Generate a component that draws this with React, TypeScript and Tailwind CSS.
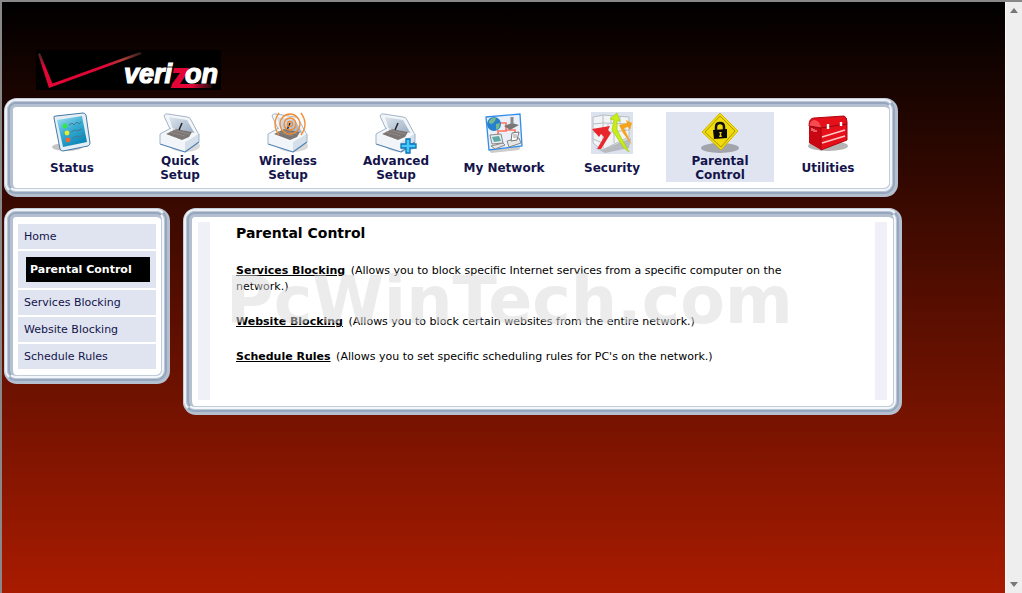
import { ReactNode } from 'react';
import { clsx } from 'clsx';

// Bevelled frame, lit from the top left: the highlight is outside on top/left and inside on bottom/right
function PanelFrame({ className, children }: { className?: string; children: ReactNode }) {
  return (
    <div className={clsx('rounded-[13px] border-t border-r-3 border-b-3 border-l border-t-[#c3cdd9] border-r-[#b4c0cf] border-b-[#b4c0cf] border-l-[#c3cdd9] bg-[#b4c0cf]', className)}>
      <div className="rounded-[11px] border-2 border-t-[#eef2f7] border-r-[#95a6be] border-b-[#95a6be] border-l-[#eef2f7] bg-[#b4c0cf]">
        <div className="rounded-[9px] border border-[#bcc7d5] bg-[#b4c0cf]">
          <div className="rounded-lg border-2 border-t-[#95a6be] border-r-[#f3f6fa] border-b-[#f3f6fa] border-l-[#95a6be] bg-[#b4c0cf]">
            <div className="rounded-md border-t-3 border-r border-b border-l-3 border-t-[#b4c0cf] border-r-[#c3cdd9] border-b-[#c3cdd9] border-l-[#b4c0cf] bg-white">
              {children}
            </div>
          </div>
        </div>
      </div>
    </div>
  );
}

function StatusIcon() {
  return (
    <svg width="42" height="42" viewBox="0 0 42 42" aria-hidden="true">
      <defs>
        <linearGradient id="screen" x1="0" y1="0" x2="0.6" y2="1">
          <stop offset="0" stopColor="#a6e0f2" />
          <stop offset="0.5" stopColor="#3aaed4" />
          <stop offset="1" stopColor="#0a86b8" />
        </linearGradient>
      </defs>
      <ellipse cx="16" cy="35" rx="15" ry="4" fill="#c4c4c4" />
      <path d="M3 6Q2 4 5 4L32 1Q34 1 35 3L39 31Q39 33 37 34L12 39Q10 39 9 37Z" fill="#e6eef5" stroke="#4379a6" strokeLinejoin="round" />
      <path d="M6 8 31 4 36 30 12 35Z" fill="url(#screen)" />
      <path d="M18 13l3-2 2 2 3-3 2 2 2-2M20 20l4-2 2 1 5-2M21 27l4-3 3 1 5-2" fill="none" stroke="#477891" />
      <circle cx="14" cy="14" r="2.4" fill="#35e83d" />
      <circle cx="16" cy="21" r="2.4" fill="#e9ed22" />
      <circle cx="17" cy="28" r="2.4" fill="#f16835" />
    </svg>
  );
}

function RouterIcon({ waves, plus }: { waves?: boolean; plus?: boolean }) {
  return (
    <svg width="42" height="42" viewBox="0 0 42 42" aria-hidden="true">
      <defs>
        <linearGradient id="lid" x1="0" y1="0" x2="1" y2="1">
          <stop offset="0" stopColor="#dde5ed" />
          <stop offset="1" stopColor="#96abc2" />
        </linearGradient>
      </defs>
      <ellipse cx="26" cy="34" rx="15" ry="6" fill="#d9d9d9" />
      <path d="M5 4Q6 1 9 2L28 5Q31 5 32 8L40 23 33 24 12 19Z" fill="#f3f6f9" stroke="#a3b5c7" strokeLinejoin="round" />
      <path d="M10 5 28 8 36 22 14 18Z" fill="url(#lid)" />
      <path d="M1 22 12 16 40 22 26 31Z" fill="#f4f7fa" />
      <path d="M7 22 17 17 33 20 30 25 23 28Z" fill="#7b7674" />
      <path d="M11 20 26 24M14 18 30 22" stroke="#8f8a88" />
      <path d="M1 22 26 30V40L1 32Z" fill="#f1f5f9" />
      <path d="M26 30 40 22V30L26 40Z" fill="#d5dfe9" />
      <path d="M1 32 26 40 40 30" fill="none" stroke="#4f82b3" strokeWidth="1.2" strokeLinejoin="round" />
      <path d="M1 32V22L12 16M40 30V22" fill="none" stroke="#9fb3c8" />
      <path d="M20 18 23 11" stroke="#222" strokeWidth="1.5" />
      {waves && (
        <g fill="none" stroke="#f58a2d" strokeWidth="1.3">
          <circle cx="23" cy="12" r="2.5" />
          <circle cx="23" cy="12" r="6" />
          <circle cx="23" cy="12" r="10" />
          <path d="M12 1Q4 12 12 23M34 1Q42 12 34 23" />
        </g>
      )}
      {plus && <path d="M31 27h4v5h6v4h-6v5h-4v-5h-5v-4h5Z" fill="#44c9fa" stroke="#0873b6" strokeWidth="1.3" />}
    </svg>
  );
}

function NetworkIcon() {
  return (
    <svg width="42" height="42" viewBox="0 0 42 42" aria-hidden="true">
      <path d="M5 36 38 34 36 38 8 41Z" fill="#ccc" />
      <path d="M3 5 37 2 39 34 6 38Z" fill="#e9f0f9" stroke="#318de9" strokeWidth="1.3" />
      <path d="M15 11h8v8h-8v7M23 18h9v8" fill="none" stroke="#ff735f" strokeWidth="1.7" />
      <circle cx="11" cy="12" r="7" fill="#277fd0" />
      <path d="M6 9q4-5 7-3l-1 3-3 3-3-1ZM13 12l4-1-1 5-3 2Z" fill="#76b98b" />
      <path d="M21 14 29 11 36 13 27 18Z" fill="#777" />
      <path d="M29 12V5" stroke="#888" strokeWidth="3" />
      <path d="M7 23 18 22 20 31 9 32Z" fill="#e8edf0" stroke="#888" />
      <path d="M9 25 16 24 18 29 11 30Z" fill="#5ca9a7" />
      <path d="M8 34 20 31 22 33 12 37ZM24 29 36 26 38 31 26 35Z" fill="#e6e6e6" stroke="#888" />
      <path d="M28 29 29 21 36 20 34 28Z" fill="#fff" stroke="#777" />
      <path d="M30 23h4M30 25h4" stroke="#999" />
    </svg>
  );
}

function SecurityIcon() {
  return (
    <svg width="42" height="42" viewBox="0 0 42 42" aria-hidden="true">
      <path d="M0 0h42v42H0Z" fill="#dce3ee" />
      <path d="M2 35 11 38 40 26 38 36 14 41Z" fill="#b7bbc0" />
      <path d="M2 5 12 3 38 5V25L11 38 2 31Z" fill="#f1f3f5" stroke="#b8bec5" />
      <path d="M2 12l10-1 26 1M2 20l10 1 26-3M2 27l10 4M12 3v34M20 4v8M29 4v8M17 12v8M34 12v7M23 20v11" fill="none" stroke="#b8bec5" />
      <path d="M6 37 13 25 10 22 8 25 1 17 19 14 17 18 20 21 10 37Z" fill="#e9262b" />
      <path d="M21 18 23 8 19 7 26 1 29 9H26L26 18 38 40 33 36Z" fill="#c9ed16" stroke="#a4cd08" strokeWidth=".7" />
      <path d="M32 21 28 13 36 11 35 8 41 11 39 18 37 15 33 16 41 33Z" fill="#f6a31c" />
    </svg>
  );
}

function ParentalIcon() {
  return (
    <svg width="42" height="42" viewBox="0 0 42 42" aria-hidden="true">
      <ellipse cx="21" cy="36" rx="19" ry="5" fill="#a2a5ab" />
      <path d="M21 1 39 19 22 38 3 20Z" fill="#f2db0b" stroke="#d0b900" />
      <path d="M21 4 36 19 22 35 6 20Z" fill="none" stroke="#a89800" />
      <path d="M17 19v-4q0-4 4-4t4 4v4" fill="none" stroke="#111" strokeWidth="2.5" />
      <path d="M14 18 28 17V26L15 27Z" fill="#090909" />
      <path d="M20 20h3l-1 2 1 3h-3l1-3Z" fill="#e8d000" />
    </svg>
  );
}

function ToolboxIcon() {
  return (
    <svg width="42" height="42" viewBox="0 0 42 42" aria-hidden="true">
      <ellipse cx="21" cy="34" rx="20" ry="5" fill="#b5b5b5" />
      <path d="M2 14 14 16V38L2 31Z" fill="#c80713" />
      <path d="M2 14Q2 6 7 6L37 4Q40 5 40 10V28L14 38V16Z" fill="#e6101b" stroke="#ad0610" />
      <path d="M2 14Q4 7 8 8 13 9 14 16Z" fill="#f44a50" />
      <path d="M2 14 14 16 40 12" fill="none" stroke="#940710" />
      <path d="M15 25 38 18M15 31 38 24" stroke="#ffc5c5" strokeWidth="1.6" />
      <path d="M21 12v5M34 10v4" stroke="#fff" strokeWidth="2.4" />
      <path d="M5 16v3M7 17v3M9 18v2" stroke="#ffb5b8" />
    </svg>
  );
}

function VerizonLogo() {
  return (
    <svg width="185" height="40" viewBox="0 0 185 40" role="img" aria-label="verizon">
      <defs>
        <linearGradient id="check-left" x1="0" y1="0" x2="0" y2="1">
          <stop offset="0" stopColor="#3b2a24" />
          <stop offset="0.4" stopColor="#e40537" />
        </linearGradient>
        <linearGradient id="check-right" x1="0" y1="0" x2="1" y2="0">
          <stop offset="0.6" stopColor="#e40537" />
          <stop offset="0.8" stopColor="#ad3b38" />
          <stop offset="1" stopColor="#251c17" />
        </linearGradient>
        <linearGradient id="z-tail" x1="0" y1="0" x2="1" y2="0">
          <stop offset="0.5" stopColor="#e40537" />
          <stop offset="1" stopColor="#140b08" />
        </linearGradient>
      </defs>
      <path d="M0 0h185v40H0Z" />
      <path d="M2 4 4 3 17 35 13 38Z" fill="url(#check-left)" />
      <path d="M13 38 15 34 104 2 106 4Z" fill="url(#check-right)" />
      <path d="M138 18H153L152 22 144 34H177L176 38H135L136 34 144 23H137Z" fill="url(#z-tail)" />
      <g fontFamily="Liberation Sans, sans-serif" fontSize="27" fontWeight="bold" fontStyle="italic" fill="#fff" stroke="#fff" strokeWidth="1.2">
        <text x="88" y="33">veri</text>
        <text x="149" y="33">on</text>
      </g>
    </svg>
  );
}

const tabs = [
  { label: 'Status', icon: <StatusIcon /> },
  { label: 'Quick\nSetup', icon: <RouterIcon /> },
  { label: 'Wireless\nSetup', icon: <RouterIcon waves /> },
  { label: 'Advanced\nSetup', icon: <RouterIcon plus /> },
  { label: 'My Network', icon: <NetworkIcon /> },
  { label: 'Security', icon: <SecurityIcon /> },
  { label: 'Parental\nControl', icon: <ParentalIcon />, active: true },
  { label: 'Utilities', icon: <ToolboxIcon /> },
];

const menu = ['Home', 'Parental Control', 'Services Blocking', 'Website Blocking', 'Schedule Rules'];

const sections = [
  {
    title: 'Services Blocking',
    text: '(Allows you to block specific Internet services from a specific computer on the network.)',
  },
  { title: 'Website Blocking', text: '(Allows you to block certain websites from the entire network.)' },
  { title: 'Schedule Rules', text: "(Allows you to set specific scheduling rules for PC's on the network.)" },
];

function TopNav() {
  return (
    <PanelFrame className="w-full max-w-[894px]">
      <nav className="flex px-[5px] pt-[5px] pb-[6px]">
        {tabs.map(tab => (
          <a
            key={tab.label}
            href="#"
            className={clsx(
              'flex h-[70px] max-w-[108px] flex-1 flex-col items-center text-center text-[12px] leading-[14px] font-bold text-[#14144b]',
              tab.active && 'bg-[#e0e4f1]',
            )}
          >
            {tab.icon}
            <span className="flex flex-1 items-center whitespace-pre-line">{tab.label}</span>
          </a>
        ))}
      </nav>
    </PanelFrame>
  );
}

function SideMenu() {
  return (
    <PanelFrame className="w-[166px] shrink-0">
      <nav className="flex flex-col gap-[2px] px-[5px] pt-[7px] pb-[6px] text-[11px] text-[#14144b]">
        {menu.map(item =>
          item === 'Parental Control' ? (
            <div key={item} className="bg-[#e0e4f1] py-[6px] pr-[6px] pl-2">
              <a href="#" className="block bg-black px-1 leading-[25px] font-bold text-white">{item}</a>
            </div>
          ) : (
            <a key={item} href="#" className="bg-[#e0e4f1] px-[6px] leading-[25px]">{item}</a>
          ),
        )}
      </nav>
    </PanelFrame>
  );
}

function Content() {
  return (
    <PanelFrame className="max-w-[719px] flex-1">
      <main className="relative flex justify-between px-[6px] pt-[5px] pb-[6px] text-black">
        <div className="w-3 shrink-0 bg-[#f0f1f8]" />
        <div className="min-h-[178px] flex-1 pr-[72px] pl-[26px]">
          <h1 className="text-sm leading-[22px] font-bold">Parental Control</h1>
          <div className="mt-[19px] flex flex-col gap-[19px]">
            {sections.map(s => (
              <p key={s.title} className="text-[11px] leading-4">
                <a href="#" className="mr-[2px] font-bold underline">{s.title}</a> {s.text}
              </p>
            ))}
          </div>
        </div>
        <div className="w-3 shrink-0 bg-[#f0f1f8]" />
        {/* Watermark */}
        <div className="pointer-events-none absolute top-[48px] left-[34px] text-[65px] leading-[72px] font-bold text-[#dadada]/50">
          PcWinTech.com
        </div>
      </main>
    </PanelFrame>
  );
}

export default function App() {
  return (
    <div className="flex min-h-screen border-t-2 border-l-2 border-[#888] bg-white font-['Verdana','DejaVu_Sans',sans-serif]">
      <div className="min-w-0 flex-1 bg-linear-to-b/srgb from-black to-[#a81b00] pt-12 pl-[2px]">
        <header className="pl-8">
          <VerizonLogo />
        </header>
        <div className="mt-2 flex flex-col gap-[11px]">
          <TopNav />
          <div className="flex items-start gap-[13px]">
            <SideMenu />
            <Content />
          </div>
        </div>
      </div>
      {/* Scrollbar */}
      <div className="flex w-[17px] shrink-0 flex-col items-center justify-between border-l border-[#fafafa] bg-[#eee] py-[6px]">
        <svg width="8" height="5" viewBox="0 0 8 5" aria-hidden="true"><path d="M4 0 8 5H0Z" fill="#777" /></svg>
        <svg width="8" height="5" viewBox="0 0 8 5" aria-hidden="true"><path d="M0 0H8L4 5Z" fill="#777" /></svg>
      </div>
    </div>
  );
}
